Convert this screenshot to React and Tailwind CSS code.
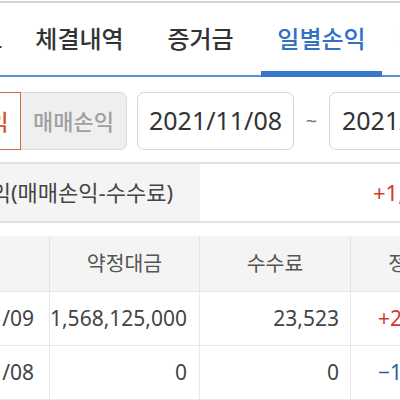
import React from "react";

const tabs = [
  { label: "계좌잔고" },
  { label: "체결내역" },
  { label: "증거금" },
  { label: "일별손익", active: true },
  { label: "내역조회" },
];

const rows = [
  { date: "2021/11/09", amount: "1,568,125,000", fee: "23,523", pnl: "+2,351,477", up: true },
  { date: "2021/11/08", amount: "0", fee: "0", pnl: "−1,020,000", up: false },
];

const App = () => {
  return (
    <div className="w-[400px] h-[400px] overflow-hidden bg-white font-['Noto_Sans','Noto_Sans_CJK_KR',sans-serif]">
      <div className="mt-[1px] h-[2px] bg-[#d6d6d6]" />

      {/* tabs */}
      <div className="flex h-[74px] -ml-[102px]">
        {tabs.map((t) => (
          <div
            key={t.label}
            className={
              t.active
                ? "w-[121px] shrink-0 flex justify-center pt-[20px] border-b-[6px] border-[#3877c9] text-[#2f72c4] text-[24px] leading-[32px] font-medium"
                : "w-[121px] shrink-0 flex justify-center pt-[20px] border-b-2 border-[#5a94d8] text-[#333] text-[24px] leading-[32px] font-medium"
            }
          >
            <span className="whitespace-nowrap">{t.label}</span>
          </div>
        ))}
      </div>

      {/* filter row */}
      <div className="h-[85px] pt-[15px]">
        <div className="flex items-center h-[58px] -ml-[85px]">
          <div className="w-[106px] h-full shrink-0 flex items-center justify-center border border-[#c96a48] text-[#d0542c] text-[22px] font-medium whitespace-nowrap">
            실현손익
          </div>
          <div className="w-[106px] h-full shrink-0 flex items-center justify-center border border-l-0 border-[#dcdcdc] rounded-r-[7px] bg-[#efefef] text-[#a0a0a0] text-[22px] font-medium whitespace-nowrap">
            매매손익
          </div>
          <div className="ml-[10px] w-[157px] h-full shrink-0 flex items-center pl-[11px] border border-[#d4d4d4] rounded-[7px] text-[#333] text-[25px] whitespace-nowrap">
            2021/11/08
          </div>
          <div className="w-[35px] shrink-0 text-center text-[#777] text-[20px]">~</div>
          <div className="w-[157px] h-full shrink-0 flex items-center pl-[12px] border border-[#d4d4d4] rounded-[7px] text-[#333] text-[25px] whitespace-nowrap">
            2021/11/09
          </div>
        </div>
      </div>

      <div className="h-[2px] bg-[#e2e2e2]" />

      {/* summary */}
      <div className="flex h-[57px]">
        <div className="w-[200px] shrink-0 bg-[#f4f4f4] flex items-center justify-end pr-[27px] overflow-hidden">
          <span className="whitespace-nowrap text-[#444] text-[22px]">실현손익(매매손익-수수료)</span>
        </div>
        <div className="flex-1 flex items-center pl-[173px] overflow-hidden">
          <span className="whitespace-nowrap text-[#cf3a30] text-[22px]">+1,331,477</span>
        </div>
      </div>

      <div className="h-[2px] bg-[#e2e2e2]" />

      {/* table */}
      <div className="mt-[13px]">
        <div className="flex h-[56px] -ml-[100px] bg-[#f4f4f4] border-b border-[#e4e4e4] text-[#555] text-[20.5px]">
          <div className="w-[150px] shrink-0 border-r border-[#e4e4e4] flex items-center justify-center">일자</div>
          <div className="w-[150px] shrink-0 border-r border-[#e4e4e4] flex items-center justify-center">약정대금</div>
          <div className="w-[151px] shrink-0 border-r border-[#e4e4e4] flex items-center justify-center">수수료</div>
          <div className="w-[150px] shrink-0 flex items-center justify-center whitespace-nowrap">정산손익</div>
        </div>
        {rows.map((r) => (
          <div key={r.date} className="flex h-[54px] -ml-[100px] border-b border-[#e8e8e8] text-[#444] text-[21px]">
            <div className="w-[150px] shrink-0 border-r border-[#e8e8e8] flex items-center justify-end pr-[15px]">{r.date}</div>
            <div className="w-[150px] shrink-0 border-r border-[#e8e8e8] flex items-center justify-end pr-[12px]">{r.amount}</div>
            <div className="w-[151px] shrink-0 border-r border-[#e8e8e8] flex items-center justify-end pr-[11px]">{r.fee}</div>
            <div
              className={
                r.up
                  ? "w-[150px] shrink-0 flex items-center pl-[27px] text-[#cf3a30] whitespace-nowrap"
                  : "w-[150px] shrink-0 flex items-center pl-[27px] text-[#2a5aa8] whitespace-nowrap"
              }
            >
              {r.pnl}
            </div>
          </div>
        ))}
      </div>
    </div>
  );
};

export default App;
